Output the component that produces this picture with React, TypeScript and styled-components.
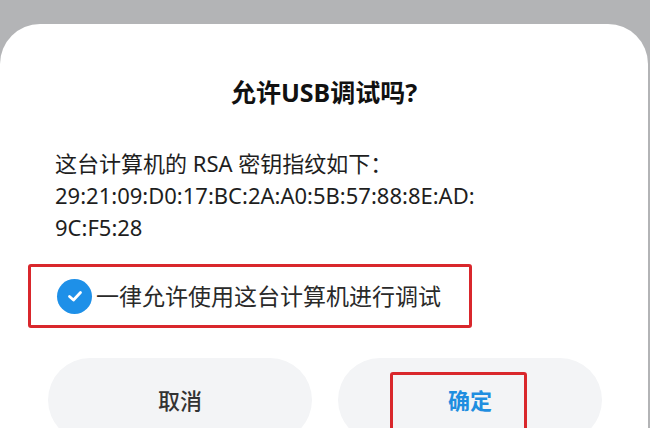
import styled, { createGlobalStyle } from 'styled-components'

const GlobalStyle = createGlobalStyle`
  html, body {
    margin: 0;
    padding: 0;
    background: #b3b4b6;
    overflow: hidden;
  }
  body {
    font-family: "Noto Sans", "Noto Sans CJK SC", sans-serif;
  }
`

const Screen = styled.div`
  width: 650px;
  height: 428px;
  padding-top: 24px;
  box-sizing: border-box;
  overflow: hidden;
`

const Sheet = styled.section`
  width: 648px;
  height: 460px;
  background: #ffffff;
  border-radius: 40px 40px 0 0;
  padding: 52px 0 0;
  box-sizing: border-box;
  display: flex;
  flex-direction: column;
`

const Title = styled.h2`
  margin: 0;
  font-size: 25px;
  line-height: 32px;
  font-weight: 700;
  color: #111;
  text-align: center;
`

const Message = styled.p`
  margin: 39px 0 0;
  padding: 0 55px;
  font-size: 22px;
  line-height: 32px;
  color: #1e1e1e;
  font-weight: 400;
`

const Highlight = styled.div`
  margin: 21px 0 0 28px;
  width: 444px;
  height: 64px;
  box-sizing: border-box;
  border: 3px solid #d9272c;
  border-radius: 3px;
  display: flex;
  align-items: center;
  padding-left: 26px;
  gap: 4px;
`

const CheckCircle = styled.span`
  width: 35px;
  height: 35px;
  border-radius: 50%;
  background: #1e90e8;
  display: flex;
  align-items: center;
  justify-content: center;
  flex-shrink: 0;
`

const CheckLabel = styled.span`
  font-size: 23px;
  color: #2a2a2a;
  line-height: 32px;
`

const Actions = styled.div`
  margin: 30px 0 0 48px;
  display: flex;
  gap: 26px;
`

const PillButton = styled.button<{ $primary?: boolean }>`
  position: relative;
  width: 264px;
  height: 84px;
  border: none;
  border-radius: 42px;
  background: #f3f4f6;
  font-family: "Noto Sans", "Noto Sans CJK SC", sans-serif;
  font-size: 22px;
  font-weight: ${({ $primary }) => ($primary ? 700 : 500)};
  color: ${({ $primary }) => ($primary ? '#1f8ee0' : '#333')};
  line-height: 1;
  display: flex;
  align-items: flex-end;
  justify-content: center;
  padding: 0 0 31px;
  box-sizing: border-box;
`

const Annotation = styled.span`
  position: absolute;
  left: 52px;
  top: 14px;
  width: 137px;
  height: 90px;
  border: 3px solid #d9272c;
  border-radius: 3px;
  box-sizing: border-box;
`

export default function App() {
  return (
    <>
      <GlobalStyle />
      <Screen>
        <Sheet>
          <Title>允许USB调试吗?</Title>
          <Message>
            这台计算机的 RSA 密钥指纹如下：
            <br />
            29:21:09:D0:17:BC:2A:A0:5B:57:88:8E:AD:
            <br />
            9C:F5:28
          </Message>
          <Highlight>
            <CheckCircle>
              <svg width="18" height="18" viewBox="0 0 18 18" fill="none">
                <path
                  d="M3.5 9.5 L7.5 13 L14.5 5.5"
                  stroke="#fff"
                  strokeWidth="2.8"
                  strokeLinecap="round"
                  strokeLinejoin="round"
                />
              </svg>
            </CheckCircle>
            <CheckLabel>一律允许使用这台计算机进行调试</CheckLabel>
          </Highlight>
          <Actions>
            <PillButton>取消</PillButton>
            <PillButton $primary>
              确定
              <Annotation />
            </PillButton>
          </Actions>
        </Sheet>
      </Screen>
    </>
  )
}
